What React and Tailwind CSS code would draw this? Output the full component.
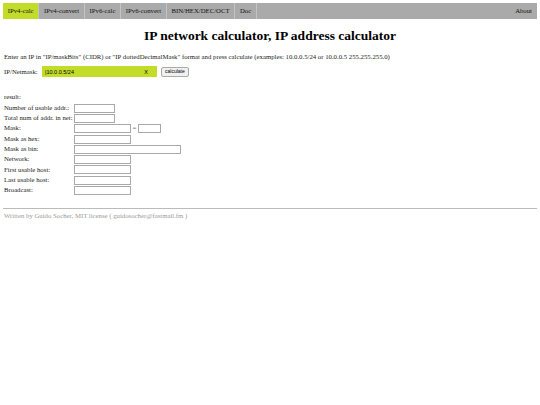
const tabs = ['IPv4-calc', 'IPv4-convert', 'IPv6-calc', 'IPv6-convert', 'BIN/HEX/DEC/OCT', 'Doc'];

const Field = ({ w }) => (
  <span className={`inline-block h-[9px] ${w} border border-[#a9a9a9] bg-white align-middle`}></span>
);

const Row = ({ label, children }) => (
  <tr>
    <td className="h-[10.3px] whitespace-nowrap p-0 pl-[1px] pr-[1px] leading-none">{label}</td>
    <td className="p-0 leading-none">{children}</td>
  </tr>
);

export default function App() {
  return (
    <div className="min-h-screen bg-white px-[3px] pt-[3px] font-['Liberation_Serif',serif] text-[6.75px] text-[#222]">
      {/* nav */}
      <nav className="flex h-[16px] items-stretch bg-[#aaaaaa] text-[#111]">
        {tabs.map((t, i) => (
          <span
            key={t}
            className={`flex items-center border-r border-[#c4c4c4] px-[4.7px] ${i === 0 ? 'bg-[#c3dc2a]' : ''}`}
          >
            {t}
          </span>
        ))}
        <span className="ml-auto flex items-center px-[5px]">About</span>
      </nav>

      <h1 className="mt-[10px] text-center text-[13.5px] font-bold leading-none text-black">
        IP network calculator, IP address calculator
      </h1>

      <p className="mt-[11px] pl-[1px] leading-none">
        Enter an IP in "IP/maskBits" (CIDR) or "IP dottedDecimalMask" format and press calculate (examples: 10.0.0.5/24 or 10.0.0.5 255.255.255.0)
      </p>

      <div className="mt-[6px] flex items-center pl-[1px]">
        <span className="w-[38px]">IP/Netmask:</span>
        <span className="flex h-[11px] w-[115px] items-center justify-between bg-[#c3dc2a] px-[3px] font-['Liberation_Sans',sans-serif] text-[5.5px] text-black">
          <span>|10.0.0.5/24</span>
          <span className="pr-[6px]">X</span>
        </span>
        <span className="ml-[4px] flex h-[10px] items-center rounded-[2px] border border-[#aaa] bg-[#f0f0f0] px-[3px] font-['Liberation_Sans',sans-serif] text-[5px] text-black">
          calculate
        </span>
      </div>

      <div className="mt-[17px] pl-[1px] leading-none">result:</div>
      <table className="mt-[2px] border-collapse">
        <tbody>
          <Row label="Number of usable addr.:"><Field w="w-[41px]" /></Row>
          <Row label="Total num of addr. in net:"><Field w="w-[41px]" /></Row>
          <Row label="Mask:">
            <Field w="w-[57px]" />
            <span className="mx-[2px] align-middle text-[#666]">=</span>
            <Field w="w-[23px]" />
          </Row>
          <Row label="Mask as hex:"><Field w="w-[57px]" /></Row>
          <Row label="Mask as bin:"><Field w="w-[107px]" /></Row>
          <Row label="Network:"><Field w="w-[57px]" /></Row>
          <Row label="First usable host:"><Field w="w-[57px]" /></Row>
          <Row label="Last usable host:"><Field w="w-[57px]" /></Row>
          <Row label="Broadcast:"><Field w="w-[57px]" /></Row>
        </tbody>
      </table>

      <hr className="mt-[12px] border-t border-[#bbb]" />
      <p className="mt-[4px] pl-[1px] leading-none text-[#999]">
        Written by Guido Socher, MIT license ( guidosocher@fastmail.fm )
      </p>
    </div>
  );
}
